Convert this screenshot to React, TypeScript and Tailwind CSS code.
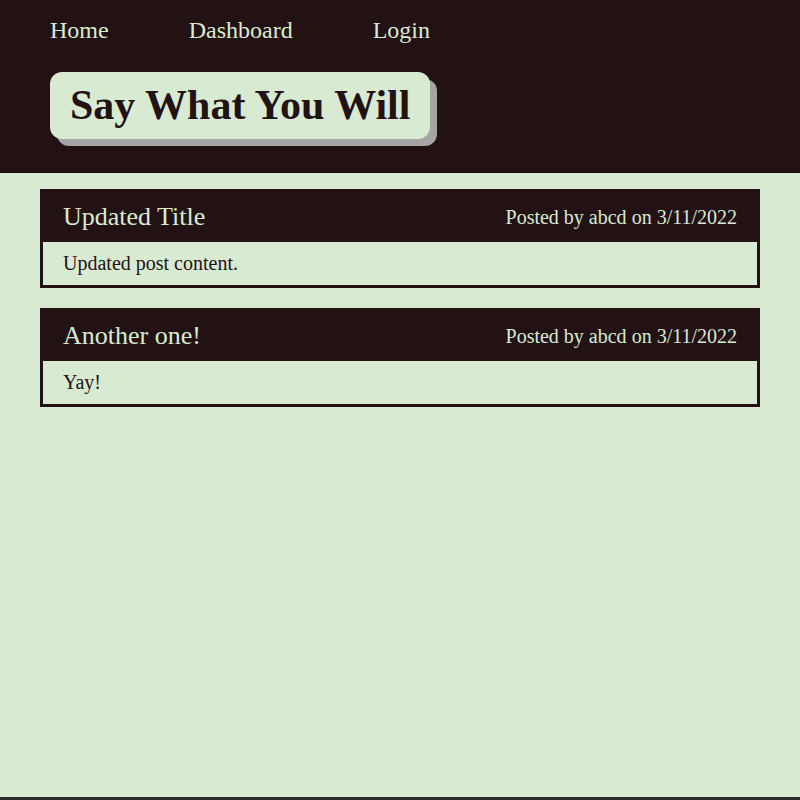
import React from "react";

const posts = [
  { title: "Updated Title", author: "abcd", date: "3/11/2022", content: "Updated post content." },
  { title: "Another one!", author: "abcd", date: "3/11/2022", content: "Yay!" },
];

export default function App() {
  return (
    <div
      className="min-h-screen flex flex-col bg-[#d9ead3] text-[#231213]"
      style={{ fontFamily: '"Liberation Serif", "Times New Roman", serif' }}
    >
      <header className="bg-[#231213] pt-[17px] pb-[34px]">
        <nav className="flex gap-[80px] pl-[50px] text-[24px] leading-[27px] text-[#d9ead3]">
          <a href="#">Home</a>
          <a href="#">Dashboard</a>
          <a href="#">Login</a>
        </nav>
        <div className="mt-[28px] ml-[50px] flex">
          <h1 className="rounded-[12px] bg-[#d9ead3] px-[20px] py-[11px] text-[42px] font-bold leading-[45px] text-[#231213] shadow-[7px_7px_0_#a5a5a5]">
            Say What You Will
          </h1>
        </div>
      </header>
      <main className="flex-1 flex flex-col gap-[20px] px-[40px] pt-[16px]">
        {posts.map((p) => (
          <article key={p.title} className="border-[3px] border-[#231213]">
            <div className="flex h-[50px] items-center justify-between bg-[#231213] px-[20px] text-[#d9ead3]">
              <h2 className="text-[26px] leading-[30px]">{p.title}</h2>
              <span className="text-[20px] leading-[23px]">
                Posted by {p.author} on {p.date}
              </span>
            </div>
            <p className="px-[20px] py-[10px] text-[20px] leading-[23px]">{p.content}</p>
          </article>
        ))}
      </main>
      <footer className="h-[3px] bg-[#2b2b2b]" />
    </div>
  );
}
